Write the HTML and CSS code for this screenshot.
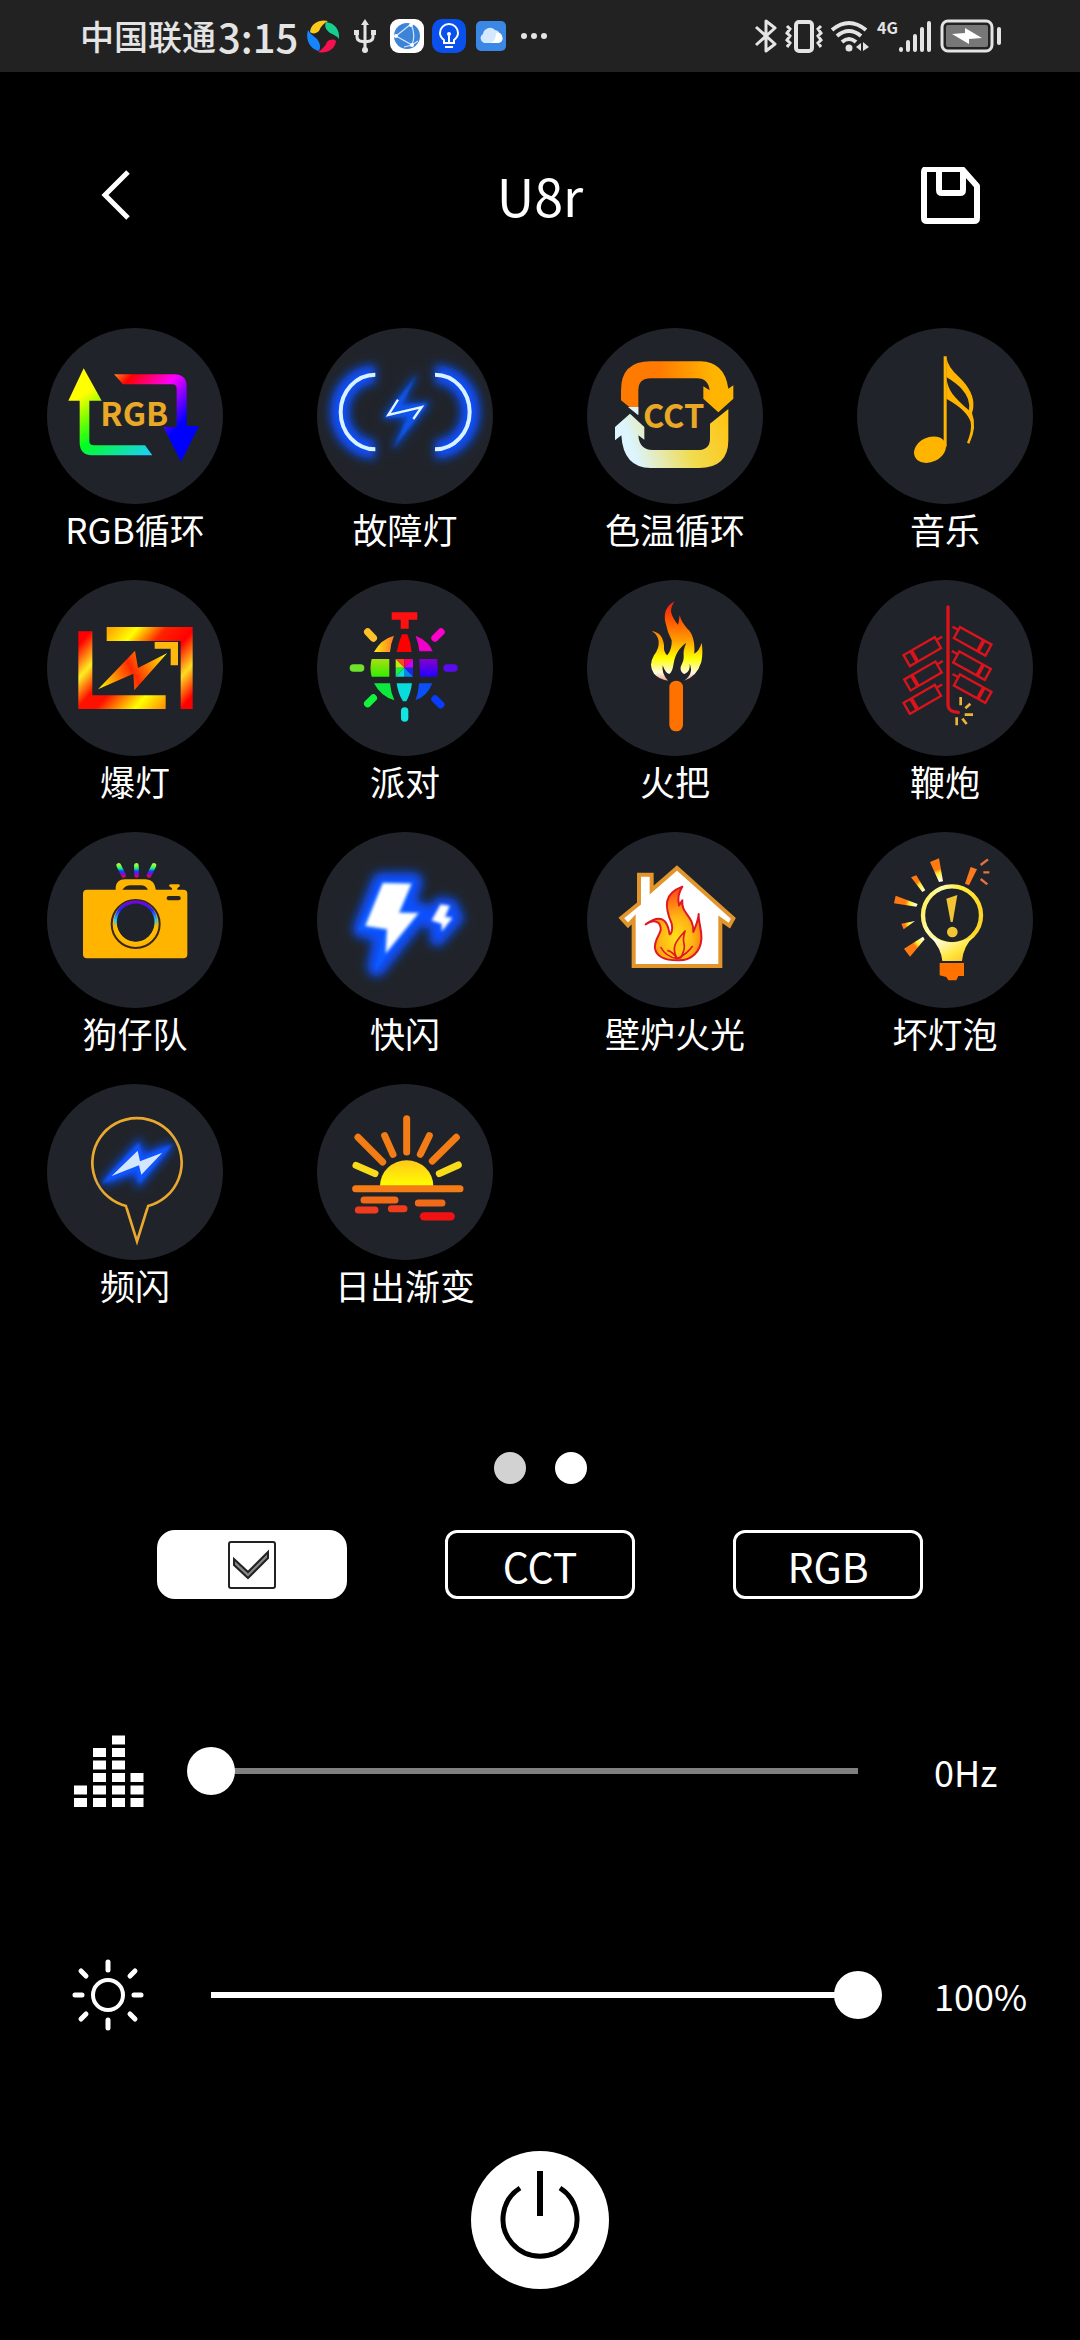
FILE: index.html
```html
<!DOCTYPE html>
<html lang="zh-CN">
<head>
    <meta charset="UTF-8">
    <meta name="viewport" content="width=device-width, initial-scale=1.0">
    <title>U8r</title>
    <link rel="stylesheet" href="styles.css">
</head>
<body>
    <div class="status-bar">
        <div class="status-left">
            <span class="carrier">中国联通</span>
            <span class="clock">3:15</span>
            <div class="status-icons">
                <svg width="34" height="34" viewBox="0 0 34 34">
                    <path d="M4 13C5 4 14 0 22 2C18 4 15 7 13 12C10 15 6 15 4 13Z" fill="#fbc91c"/>
                    <path d="M20 3C29 4 34 11 33 20C31 17 28 16 24 14C20 11 18 7 20 3Z" fill="#16cf8d"/>
                    <path d="M30 22C29 31 20 35 12 33C16 30 19 28 21 23C24 20 28 20 30 22Z" fill="#f5104f"/>
                    <path d="M2 11C4 15 8 17 11 20C14 24 15 28 13 32C4 30 -1 21 2 11Z" fill="#1684fc"/>
                </svg>
                <svg width="34" height="34" viewBox="0 0 34 34" fill="none" stroke="#e4e4e4" stroke-width="3">
                    <path d="M17 4V30M9 14V18Q9 21 12 22L17 23L22 22Q25 21 25 18V14"/>
                    <path d="M13 6L17 0L21 6ZM6 11H11V16H6ZM23 11H28V16H23Z" fill="#e4e4e4" stroke="none"/>
                    <circle cx="17" cy="31" r="3" fill="#e4e4e4" stroke="none"/>
                </svg>
                <svg width="34" height="34" viewBox="0 0 34 34">
                    <rect width="34" height="34" rx="9" fill="#fff"/>
                    <circle cx="17" cy="17" r="13" fill="#3d84d8"/>
                    <g fill="none" stroke="#d5e8fa" stroke-width="1.200">
                        <path d="M6 17L21 5M6 17L22 26M21 5Q26 16 22 26M22 26L28 22M14 28L22 26"/>
                    </g>
                    <g fill="#fff"><circle cx="6" cy="17" r="2"/><circle cx="21" cy="6" r="2"/><circle cx="22" cy="26" r="2"/></g>
                </svg>
                <svg width="34" height="34" viewBox="0 0 34 34" fill="none" stroke="#fff" stroke-width="2">
                    <rect width="34" height="34" rx="10" fill="#0a50ec" stroke="none"/>
                    <path d="M12 24V21Q8 18 8 14A9 9 0 0 1 26 14Q26 18 22 21V24ZM13 28H21M17 24V17"/>
                    <circle cx="17" cy="15" r="2" fill="#fff" stroke="none"/>
                </svg>
                <svg width="34" height="34" viewBox="0 0 34 34">
                    <rect x="2" y="2" width="30" height="30" rx="5" fill="#3b87e6"/>
                    <path d="M10 24A5 5 0 0 1 9 15A7 7 0 0 1 21 11A6 6 0 0 1 26 15A5 5 0 0 1 25 24Z" fill="#d4e9ff"/>
                    <path d="M16 24Q22 23 22 14Q27 13 28 17Q30 23 24 24Z" fill="#fff"/>
                </svg>
                <svg width="34" height="34" viewBox="0 0 34 34" fill="#e4e4e4">
                    <circle cx="8" cy="17" r="3"/><circle cx="18" cy="17" r="3"/><circle cx="28" cy="17" r="3"/>
                </svg>
            </div>
        </div>
        <div class="status-right">
            <svg width="22" height="34" viewBox="0 0 22 34" fill="none" stroke="#e4e4e4" stroke-width="3" stroke-linejoin="round">
                <path d="M1 8L20 25L11 32V2L20 9L1 26"/>
            </svg>
            <svg width="38" height="34" viewBox="0 0 38 34" fill="none" stroke="#e4e4e4" stroke-width="4">
                <rect x="11" y="3" width="16" height="29" rx="3"/>
                <path stroke-width="3" d="M2 7L5 10L2 14L5 17L2 21L5 24L2 28M36 7L33 10L36 14L33 17L36 21L33 24L36 28"/>
            </svg>
            <svg width="38" height="34" viewBox="0 0 38 34" fill="none" stroke="#e4e4e4" stroke-width="4">
                <path d="M1 11Q18 -3 35 11M6 17Q18 7 30 17M11 23Q18 17 25 23"/>
                <circle cx="18" cy="29" r="3.500" fill="#e4e4e4" stroke="none"/>
                <path d="M25 28L30 24V32ZM32 23L38 28L32 32Z" fill="#e4e4e4" stroke="none"/>
            </svg>
            <div class="network">
                <span>4G</span>
                <svg width="34" height="34" viewBox="0 0 34 34" fill="none" stroke="#e4e4e4" stroke-width="4" stroke-linecap="round">
                    <path d="M3 30V31M10 23V31M17 17V31M24 10V31M31 4V31"/>
                </svg>
            </div>
            <svg width="62" height="34" viewBox="0 0 62 34">
                <rect x="2" y="2" width="50" height="30" rx="6" fill="none" stroke="#e4e4e4" stroke-width="3"/>
                <rect x="6" y="6" width="42" height="22" rx="2" fill="#777"/>
                <path d="M12 15L25 14V9L42 19L29 20V25Z" fill="#fff"/>
                <rect x="57" y="8" width="4" height="18" rx="2" fill="#e4e4e4"/>
            </svg>
        </div>
    </div>

    <header class="header">
        <button class="icon-btn" aria-label="返回">
            <svg width="60" height="60" viewBox="0 0 60 60" fill="none" stroke="#fff" stroke-width="5"><path d="M28 5L5 28L28 51"/></svg>
        </button>
        <h1>U8r</h1>
        <button class="icon-btn" aria-label="保存">
            <svg width="60" height="60" viewBox="0 0 60 60" fill="none" stroke="#fff" stroke-width="6" stroke-linejoin="round">
                <path d="M7 2H42L57 19V51Q57 54 54 54H7Q4 54 4 51V5Q4 2 7 2Z"/>
                <path d="M19 2V23Q19 26 22 26H40Q43 26 43 23V2"/>
            </svg>
        </button>
    </header>

    <main>
        <div class="effects">
            <button class="effect">
                <svg viewBox="49 53 528 528">
                    <defs>
                        <linearGradient id="rgbUp" gradientUnits="userSpaceOnUse" x1="159" y1="174" x2="340" y2="440">
                            <stop offset="0.2" stop-color="#ff0"/><stop offset="0.4" stop-color="#7f0"/><stop offset="0.6" stop-color="#0f2"/><stop offset="1" stop-color="#1cd0f5"/>
                        </linearGradient>
                        <linearGradient id="rgbDown" gradientUnits="userSpaceOnUse" x1="250" y1="200" x2="452" y2="380">
                            <stop offset="0" stop-color="#f72"/><stop offset="0.14" stop-color="#f00"/><stop offset="0.5" stop-color="#f0f"/><stop offset="0.9" stop-color="#00f"/>
                        </linearGradient>
                    </defs>
                    <path fill="url(#rgbUp)" d="M159 174L213 271H176V392Q176 405 190 405H343L365 435H185Q147 435 147 396V271H113Z"/>
                    <path fill="url(#rgbDown)" d="M250 192H430Q468 192 468 228V347H505L451 454L398 350H438V236Q438 222 425 222H277Z"/>
                    <text class="disc-text" x="311" y="348">RGB</text>
                </svg>
                <span>RGB循环</span>
            </button>
            <button class="effect">
                <svg viewBox="859 53 528 528">
                    <defs>
                        <filter id="glow" x="-50%" y="-50%" width="200%" height="200%"><feGaussianBlur stdDeviation="15"/></filter>
                        <filter id="soft" x="-50%" y="-50%" width="200%" height="200%"><feGaussianBlur stdDeviation="5"/></filter>
                    </defs>
                    <g fill="none">
                        <path filter="url(#glow)" stroke="#0a50ff" stroke-width="58" d="M1034 192A106 112 0 0 0 1034 417M1213 192A106 112 0 0 1 1213 417"/>
                        <path stroke="#d8f2ff" stroke-width="12" d="M1034 193A104 112 0 0 0 1034 417M1213 193A104 112 0 0 1 1213 417"/>
                    </g>
                    <path filter="url(#glow)" fill="#0a4be0" stroke="#0a4be0" stroke-width="8" d="M1158 193L1060 322L1133 318L1088 414L1195 278L1112 285Z"/>
                    <path filter="url(#soft)" fill="#0d55ee" d="M1158 193L1060 322L1133 318L1088 414L1192 278L1112 285Z"/>
                    <path fill="none" stroke="#e4f6ff" stroke-width="7" d="M1102 268L1073 314L1173 290L1148 326"/>
                </svg>
                <span>故障灯</span>
            </button>
            <button class="effect">
                <svg viewBox="49 53 528 528">
                    <defs>
                        <linearGradient id="warm" gradientUnits="userSpaceOnUse" x1="220" y1="0" x2="450" y2="0"><stop offset="0.2" stop-color="#ff7a00"/><stop offset="0.9" stop-color="#ffb400"/></linearGradient>
                        <linearGradient id="cool" gradientUnits="userSpaceOnUse" x1="150" y1="470" x2="480" y2="350"><stop offset="0.15" stop-color="#dcf5fe"/><stop offset="0.6" stop-color="#f0dc50"/><stop offset="1" stop-color="#ffc414"/></linearGradient>
                    </defs>
                    <path fill="url(#warm)" d="M151 270V240Q151 153 240 153H390Q462 155 473 235L488 225V265L443 306L398 265V228L417 240Q412 204 380 204H240Q203 204 203 240V312Z"/>
                    <path fill="#dcf5fe" d="M172 290H203V315Z"/>
                    <path fill="url(#cool)" d="M178 310L221 350V388L203 375Q206 419 245 419H380Q418 419 418 385V340L473 296V390Q473 473 385 473H240Q158 473 152 375L133 390V350Z"/>
                    <text class="disc-text" x="309" y="354">CCT</text>
                </svg>
                <span>色温循环</span>
            </button>
            <button class="effect">
                <svg viewBox="859 53 528 528" fill="#ffb400">
                    <ellipse cx="1078" cy="418" rx="50" ry="37" transform="rotate(-25 1078 418)"/>
                    <path d="M1119 138H1128V410L1119 400Z"/>
                    <path fill-rule="evenodd" d="M1127 138Q1130 170 1165 200Q1212 245 1208 290Q1207 300 1204 308Q1220 350 1196 400L1189 397Q1205 360 1200 335Q1190 300 1127 265ZM1127 200Q1130 230 1145 250Q1160 270 1195 300Q1200 265 1175 238Q1160 220 1127 200Z"/>
                </svg>
                <span>音乐</span>
            </button>

            <button class="effect">
                <svg viewBox="49 44 528 528">
                    <defs>
                        <linearGradient id="fireL" gradientUnits="userSpaceOnUse" x1="143" y1="198" x2="405" y2="431"><stop offset="0.08" stop-color="#f00"/><stop offset="0.27" stop-color="#fe2"/><stop offset="0.43" stop-color="#f10"/><stop offset="0.55" stop-color="#f10"/><stop offset="0.8" stop-color="#ff0"/><stop offset="1" stop-color="#f80"/></linearGradient>
                        <linearGradient id="fireR" gradientUnits="userSpaceOnUse" x1="228" y1="205" x2="486" y2="431"><stop offset="0" stop-color="#fa0"/><stop offset="0.17" stop-color="#ff0"/><stop offset="0.36" stop-color="#f20"/><stop offset="0.55" stop-color="#f00"/><stop offset="0.74" stop-color="#fd2"/><stop offset="0.92" stop-color="#f00"/></linearGradient>
                        <linearGradient id="fireBolt" gradientUnits="userSpaceOnUse" x1="202" y1="372" x2="410" y2="263"><stop offset="0" stop-color="#ff0"/><stop offset="0.5" stop-color="#ff2a00"/><stop offset="1" stop-color="#ff0"/></linearGradient>
                    </defs>
                    <path fill="url(#fireL)" d="M143 198H185V390H405V431H143Z"/>
                    <path fill="url(#fireR)" d="M228 185H486V431H450V227H228Z"/>
                    <path fill="#ffb810" d="M372 230H442V300H420V250H372Z"/>
                    <path fill="url(#fireBolt)" d="M313 256L322 308L410 263L311 375L308 325L202 372Z"/>
                </svg>
                <span>爆灯</span>
            </button>
            <button class="effect">
                <svg viewBox="859 44 528 528">
                    <defs>
                        <linearGradient id="discoA" x1="0" y1="0" x2="1" y2="0"><stop offset="0" stop-color="#fe1"/><stop offset="1" stop-color="#f72"/></linearGradient>
                        <linearGradient id="discoB" x1="0" y1="0" x2="0" y2="1"><stop offset="0" stop-color="#ad1"/><stop offset="1" stop-color="#3e0"/></linearGradient>
                        <linearGradient id="discoC" x1="0" y1="0" x2="0" y2="1"><stop offset="0" stop-color="#80c"/><stop offset="1" stop-color="#20f"/></linearGradient>
                    </defs>
                    <path fill="#f11" d="M1083 141H1160V163H1134V190H1110V163H1083Z"/>
                    <g fill="none" stroke-width="22" stroke-linecap="round">
                        <path stroke="#fdc227" d="M1011 200L1028 218"/>
                        <path stroke="#f0c" d="M1231 200L1213 218"/>
                        <path stroke="#6fe22c" d="M968 308H990"/>
                        <path stroke="#5a0cf0" d="M1249 308H1270"/>
                        <path stroke="#12f43c" d="M1011 415L1028 398"/>
                        <path stroke="#12e4e4" d="M1122 437V458"/>
                        <path stroke="#0a3cff" d="M1213 401L1230 418"/>
                    </g>
                    <path fill="url(#discoA)" d="M1030 260Q1050 222 1090 211Q1080 235 1078 260Z"/>
                    <path fill="#f00" d="M1098 260Q1104 230 1114 207H1130Q1140 230 1143 260Z"/>
                    <path fill="#f000c8" d="M1155 211Q1195 228 1206 258H1166Q1164 235 1155 211Z"/>
                    <path fill="url(#discoB)" d="M1023 281H1076V334H1023Q1016 308 1023 281Z"/>
                    <path fill="url(#discoC)" d="M1166 281H1219Q1224 308 1219 334H1168Z"/>
                    <path fill="#0ce83c" d="M1030 354H1078Q1080 380 1091 405Q1050 393 1030 354Z"/>
                    <path fill="#08dcdc" d="M1098 354H1144Q1140 385 1127 408H1117Q1102 385 1098 354Z"/>
                    <path fill="#0a50f8" d="M1165 354H1205Q1190 393 1155 404Q1164 380 1165 354Z"/>
                    <path fill="#f42" d="M1121 307L1095 281H1121Z"/>
                    <path fill="#f06" d="M1121 307V281H1147Z"/>
                    <path fill="#c0f" d="M1121 307L1147 281V307Z"/>
                    <path fill="#22e" d="M1121 307H1147V334Z"/>
                    <path fill="#08e" d="M1121 307L1147 334H1121Z"/>
                    <path fill="#1dd" d="M1121 307V334H1095Z"/>
                    <path fill="#2e4" d="M1121 307L1095 334V307Z"/>
                    <path fill="#be1" d="M1121 307H1095V281Z"/>
                </svg>
                <span>派对</span>
            </button>
            <button class="effect">
                <svg viewBox="49 44 528 528">
                    <defs>
                        <linearGradient id="torch" x1="0" y1="0" x2="0" y2="1"><stop offset="0" stop-color="#e81c1c"/><stop offset="0.2" stop-color="#ff4a00"/><stop offset="0.5" stop-color="#ffa000"/><stop offset="0.72" stop-color="#ff0"/><stop offset="0.9" stop-color="#fffbe0"/><stop offset="1" stop-color="#f8a080"/></linearGradient>
                    </defs>
                    <rect x="296" y="346" width="41" height="152" rx="20" fill="#ff7200"/>
                    <path fill="url(#torch)" d="M312 108Q275 128 284 170Q290 200 303 225Q305 250 290 270Q278 262 280 240Q275 200 243 198Q262 208 264 228Q266 250 250 270Q232 300 250 325Q265 342 292 346Q272 325 276 300Q285 325 296 326C318 308 296 270 347 232C330 270 348 270 332 300C325 315 335 325 342 326Q360 318 357 295Q370 325 340 346Q378 335 392 290Q398 260 393 232Q386 256 371 265Q374 210 350 190Q332 170 327 150Q325 168 322 178Q306 160 301 140Q300 125 312 108Z"/>
                </svg>
                <span>火把</span>
            </button>
            <button class="effect">
                <svg viewBox="859 44 528 528" fill="none" stroke="#dc131b" stroke-width="7">
                    <defs>
                        <g id="cracker">
                            <rect x="-54" y="-19" width="108" height="38"/>
                            <path stroke-width="12" d="M28 -19V19"/>
                            <path d="M-54 -9L-74 -9"/>
                        </g>
                    </defs>
                    <path stroke-width="10" stroke-linecap="round" d="M1132 125V420Q1134 440 1163 441"/>
                    <use href="#cracker" transform="translate(1206 228) rotate(29)"/>
                    <use href="#cracker" transform="translate(1204 301) rotate(29)"/>
                    <use href="#cracker" transform="translate(1206 370) rotate(29)"/>
                    <use href="#cracker" transform="translate(1055 259) scale(-1 1) rotate(30)"/>
                    <use href="#cracker" transform="translate(1057 332) scale(-1 1) rotate(30)"/>
                    <use href="#cracker" transform="translate(1055 402) scale(-1 1) rotate(30)"/>
                    <path stroke="#e8b43a" stroke-width="8" d="M1170 395V420M1184 429L1199 415M1182 448H1207M1158 456V480M1175 460L1188 476"/>
                </svg>
                <span>鞭炮</span>
            </button>

            <button class="effect">
                <svg viewBox="49 50 528 528">
                    <defs>
                        <linearGradient id="ray" gradientUnits="userSpaceOnUse" x1="0" y1="145" x2="0" y2="186"><stop offset="0.1" stop-color="#9f3"/><stop offset="0.35" stop-color="#1e8"/><stop offset="0.55" stop-color="#14f"/><stop offset="0.75" stop-color="#80e"/><stop offset="1" stop-color="#e12"/></linearGradient>
                        <linearGradient id="lens" x1="0" y1="0" x2="0" y2="1"><stop offset="0" stop-color="#70e"/><stop offset="0.2" stop-color="#22f"/><stop offset="0.45" stop-color="#2cf"/><stop offset="0.6" stop-color="#fb0"/></linearGradient>
                    </defs>
                    <path stroke="url(#ray)" stroke-width="14" stroke-linecap="round" d="M264 150L279 180M370 150L355 180M317 150L318 180"/>
                    <rect x="157" y="223" width="313" height="206" rx="12" fill="#ffb400"/>
                    <path fill="#ffb400" d="M255 225V216Q258 192 282 192H345Q372 192 376 225ZM415 212Q415 207 420 207H443Q448 207 448 212L440 219V224H424V219Z"/>
                    <path fill="#2a2520" d="M275 223Q285 210 300 210H330Q345 210 352 223Z"/>
                    <rect x="408" y="242" width="42" height="13" rx="6" fill="#2a2520"/>
                    <circle cx="315" cy="326" r="72" fill="#ffb400" stroke="#33281a" stroke-width="6"/>
                    <circle cx="315" cy="321" r="61" fill="#20242a" stroke="url(#lens)" stroke-width="9"/>
                    <circle cx="315" cy="324" r="55" fill="#20242a"/>
                </svg>
                <span>狗仔队</span>
            </button>
            <button class="effect">
                <svg viewBox="859 50 528 528">
                    <g filter="url(#glow)" fill="#0a50ff" stroke="#0a50ff" stroke-width="58" stroke-linejoin="round">
                        <path d="M1052 200L1148 200L1118 285L1172 290L1038 455L1060 350L995 340Z"/>
                        <path stroke-width="50" d="M1230 270L1260 274L1248 303L1275 305L1220 368L1228 330L1200 315Z"/>
                    </g>
                    <path filter="url(#soft)" fill="#0a5cff" d="M1052 196L1152 198L1118 285L1176 288L1030 470L1060 350L980 345Z"/>
                    <path filter="url(#soft)" fill="#fff" stroke="#fff" stroke-width="2" d="M1057 204L1141 206L1104 293L1162 294L1066 412L1070 341L1005 331Z"/>
                    <path filter="url(#soft)" fill="#fff" stroke="#fff" stroke-width="2" d="M1230 268L1256 272L1242 305L1264 308L1234 346L1234 325L1204 315Z"/>
                </svg>
                <span>快闪</span>
            </button>
            <button class="effect">
                <svg viewBox="49 50 528 528">
                    <defs>
                        <radialGradient id="hearth" cx="0.55" cy="0.7" r="0.6"><stop offset="0" stop-color="#ffe21a"/><stop offset="0.5" stop-color="#ffb414"/><stop offset="1" stop-color="#ff5a14"/></radialGradient>
                    </defs>
                    <path fill="#fff" stroke="#e2952a" stroke-width="12" d="M319 158L488 309L476 331L449 312V452H189V312L172 330L152 308L205 265V178H243V224Z"/>
                    <path fill="url(#hearth)" stroke="#e01824" stroke-width="6" stroke-linejoin="round" d="M335 214C280 235 280 270 303 325C308 345 300 357 297 357C290 310 268 295 225 327C250 310 272 318 270 345C264 365 250 375 253 400C258 425 285 435 320 435C365 437 390 405 392 372C394 345 383 320 384 296C383 315 378 325 368 350C370 300 330 295 335 255L325 270Q318 240 335 214Z"/>
                    <path fill="#ffc414" stroke="#e01824" stroke-width="5" stroke-linejoin="round" d="M318 428C300 390 320 375 343 347C328 395 355 375 330 428Z"/>
                    <path fill="none" stroke="#e01824" stroke-width="5" d="M270 395Q285 425 320 430Q350 415 366 392M290 405Q305 408 320 430"/>
                </svg>
                <span>壁炉火光</span>
            </button>
            <button class="effect">
                <svg viewBox="859 50 528 528">
                    <defs>
                        <radialGradient id="beam" gradientUnits="userSpaceOnUse" cx="1144" cy="300" r="190"><stop offset="0.56" stop-color="#fff"/><stop offset="0.7" stop-color="#fe3"/><stop offset="0.76" stop-color="#ff7a10"/></radialGradient>
                        <linearGradient id="glass" x1="0" y1="0" x2="1" y2="0.3"><stop offset="0" stop-color="#ffec3a"/><stop offset="0.3" stop-color="#fffbb0"/><stop offset="0.6" stop-color="#ffee38"/><stop offset="1" stop-color="#ffd628"/></linearGradient>
                        <linearGradient id="neck" x1="0" y1="0" x2="1" y2="1"><stop offset="0.1" stop-color="#fff"/><stop offset="0.6" stop-color="#ffe840"/><stop offset="1" stop-color="#ffb820"/></linearGradient>
                    </defs>
                    <path fill="url(#beam)" d="M1078 140L1105 129L1117 198L1105 200ZM1021 186L1037 180L1064 225L1055 230ZM975 241L1041 266L1037 274L970 264ZM992 325L1033 317L999 342ZM1000 400L1057 364L1062 372L1018 424Z"/>
                    <path fill="#ff7a1c" d="M1200 155L1219 162L1195 210L1183 205Z"/>
                    <path stroke="#e8703a" stroke-width="7" d="M1230 149L1252 132M1238 171H1256M1230 191L1250 207"/>
                    <circle cx="1144" cy="300" r="87" fill="none" stroke="url(#glass)" stroke-width="13"/>
                    <path fill="url(#neck)" d="M1078 362Q1144 400 1210 362Q1178 392 1174 437H1115Q1112 400 1078 362Z"/>
                    <path fill="#ff7200" d="M1107 443H1180V482H1163L1157 495H1133L1127 485L1107 480Z"/>
                    <path fill="#f2c534" d="M1127 250L1160 239L1146 320H1140Z"/>
                    <circle cx="1145" cy="350" r="16" fill="#f2c534"/>
                </svg>
                <span>坏灯泡</span>
            </button>

            <button class="effect">
                <svg viewBox="49 56 528 528">
                    <path fill="none" stroke="#eaa92e" stroke-width="8" d="M352 422A134 134 0 1 0 286 422L319 528Z"/>
                    <path stroke="#20242a" stroke-width="10" d="M291 422H347"/>
                    <path filter="url(#glow)" fill="#0a50ff" stroke="#0a50ff" stroke-width="18" d="M325 235L335 275L420 240L325 352L318 315L220 352Z"/>
                    <path filter="url(#soft)" fill="#0d55ff" d="M325 232L335 275L428 235L325 357L318 315L210 357Z"/>
                    <path fill="#d4e6ff" d="M321 256L328 288L395 262L332 328L325 300L243 332Z"/>
                </svg>
                <span>频闪</span>
            </button>
            <button class="effect">
                <svg viewBox="859 56 528 528" fill="none" stroke="#f47c14" stroke-width="21" stroke-linecap="round">
                    <defs>
                        <linearGradient id="sun" x1="0" y1="0" x2="0" y2="1"><stop offset="0" stop-color="#ffc81a"/><stop offset="1" stop-color="#ff0"/></linearGradient>
                    </defs>
                    <path d="M1128 160V260M1062 211L1087 267M1196 211L1169 267M982 216L1056 290M1277 216L1205 287"/>
                    <path stroke="#f8dc1a" d="M976 300L1033 325M1283 299L1226 325"/>
                    <path fill="url(#sun)" stroke="none" d="M1048 362A80 77 0 0 1 1208 362Z"/>
                    <path d="M975 370H1288"/>
                    <path stroke="#f06a18" d="M1000 404H1093M1163 413H1234"/>
                    <path stroke="#f03c1c" d="M983 434H1033M1082 430H1120"/>
                    <path stroke="#f01212" stroke-width="25" d="M1180 453H1260"/>
                </svg>
                <span>日出渐变</span>
            </button>
        </div>

        <div class="pager">
            <span class="dot"></span>
            <span class="dot current"></span>
        </div>

        <div class="modes">
            <label class="mode mode-active">
                <input type="checkbox" aria-label="特效" checked>
                <svg width="48" height="48" viewBox="0 0 48 48"><path fill="#888" stroke="#222" stroke-width="2" d="M6 18L20 31L40 11V17L20 37L6 24Z"/></svg>
            </label>
            <button class="mode">CCT</button>
            <button class="mode">RGB</button>
        </div>

        <div class="sliders">
            <div class="slider-row">
                <label for="frequency" aria-label="频率">
                    <svg width="72" height="72" viewBox="0 0 72 72" fill="none" stroke="#fff" stroke-width="13" stroke-dasharray="9 3.500">
                        <path d="M8.500 72V47M27.500 72V10M46.500 72V0M65 72V35"/>
                    </svg>
                </label>
                <input type="range" id="frequency" min="0" max="100" value="0">
                <output for="frequency">0Hz</output>
            </div>
            <div class="slider-row">
                <label for="brightness" aria-label="亮度">
                    <svg width="72" height="72" viewBox="0 0 72 72" fill="none" stroke="#fff" stroke-width="5" stroke-linecap="round">
                        <circle cx="36" cy="36" r="15" stroke-width="4"/>
                        <path d="M36 3V11M36 61V69M3 36H10M62 36H69M9 12L14 17M58 55L63 60M9 60L14 55M58 17L63 12"/>
                    </svg>
                </label>
                <input type="range" id="brightness" class="full" min="0" max="100" value="100">
                <output for="brightness">100%</output>
            </div>
        </div>

        <button class="power" aria-label="开关">
            <svg width="138" height="138" viewBox="0 0 138 138" fill="none" stroke="#000" stroke-width="5">
                <path d="M49 37A37 37 0 1 0 89 37"/>
                <path stroke-width="6" d="M69 20V65"/>
            </svg>
        </button>
    </main>
</body>
</html>
```
FILE: styles.css
```css
* {
    box-sizing: border-box;
}

body {
    margin: 0;
    min-height: 100vh;
    background-color: #000;
    color: #fff;
    font-family: "Noto Sans CJK SC", "Noto Sans", sans-serif;
}

button {
    padding: 0;
    border: none;
    background: none;
    color: inherit;
    font-family: inherit;
    cursor: pointer;
}

svg {
    display: block;
}

/* status bar */
.status-bar {
    display: flex;
    justify-content: space-between;
    align-items: center;
    height: 72px;
    padding: 0 78px 0 80px;
    background-color: #222;
    color: #e4e4e4;
}

.status-left,
.status-right,
.status-icons {
    display: flex;
    align-items: center;
}

.carrier {
    font-size: 34px;
    font-weight: 500;
    line-height: 72px;
}

.clock {
    margin-left: 2px;
    font-size: 40px;
    font-weight: 500;
    line-height: 72px;
}

.status-icons {
    gap: 8px;
    margin-left: 8px;
}

.status-right {
    gap: 8px;
}

.network {
    display: flex;
    align-items: flex-start;
}

.network span {
    font-size: 16px;
    font-weight: 700;
    line-height: 16px;
}

/* title row */
.header {
    display: flex;
    justify-content: space-between;
    align-items: center;
    height: 250px;
    padding: 0 100px;
}

.header h1 {
    margin: 0;
    padding-bottom: 4px;
    font-size: 52px;
    font-weight: 400;
    line-height: 60px;
}

.icon-btn {
    width: 60px;
    height: 60px;
}

/* effects */
.effects {
    display: grid;
    grid-template-columns: repeat(4, 1fr);
    row-gap: 26px;
    padding-top: 6px;
}

.effect {
    display: flex;
    flex-direction: column;
    align-items: center;
    font-size: 35px;
    line-height: 50px;
}

.effect svg {
    width: 176px;
    height: 176px;
    border-radius: 50%;
    background-color: #20242a;
}

.disc-text {
    fill: #e9a825;
    font-size: 98px;
    font-weight: 700;
    text-anchor: middle;
}

.pager {
    display: flex;
    justify-content: center;
    gap: 29px;
    margin-top: 142px;
}

.dot {
    width: 32px;
    height: 32px;
    border-radius: 50%;
    background-color: #d2d2d2;
}

.dot.current {
    background-color: #fff;
}

/* mode switch */
.modes {
    display: grid;
    grid-template-columns: repeat(3, 1fr);
    justify-items: center;
    margin: 46px 108px 0;
}

.mode {
    display: grid;
    place-items: center;
    width: 190px;
    height: 69px;
    border: 3px solid #fff;
    border-radius: 12px;
    font-size: 41px;
    line-height: 60px;
}

.mode-active {
    border-radius: 18px;
    background-color: #fff;
}

.mode-active input,
.mode-active svg {
    grid-area: 1 / 1;
}

.mode-active input {
    appearance: none;
    width: 48px;
    height: 48px;
    margin: 0;
    border: 2px solid #222;
    border-radius: 3px;
}

.mode-active svg {
    pointer-events: none;
}

/* sliders */
.sliders {
    display: flex;
    flex-direction: column;
    gap: 152px;
    margin-top: 136px;
}

.slider-row {
    display: flex;
    align-items: center;
    height: 72px;
    padding-left: 72px;
}

.slider-row input {
    appearance: none;
    flex: 1;
    min-width: 0;
    height: 48px;
    margin: 0 52px 0 43px;
    background: linear-gradient(#808080, #808080) center / calc(100% - 48px) 6px no-repeat;
}

.slider-row input.full {
    background-image: linear-gradient(#fff, #fff);
}

.slider-row input::-webkit-slider-thumb {
    appearance: none;
    width: 48px;
    height: 48px;
    border-radius: 50%;
    background-color: #fff;
}

.slider-row output {
    width: 146px;
    font-size: 36px;
    line-height: 48px;
}

.power {
    display: block;
    width: 138px;
    height: 138px;
    margin: 120px auto 51px;
    border-radius: 50%;
    background-color: #fff;
}
```
